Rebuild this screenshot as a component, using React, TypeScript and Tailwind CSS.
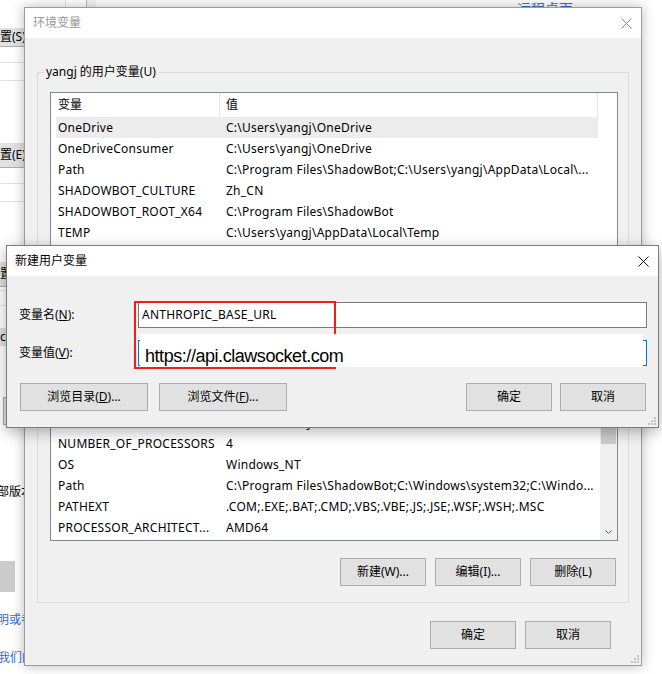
import React from "react";

const ui = "font-['Noto_Sans','Noto_Sans_CJK_SC',sans-serif]";

interface Row {
  name: string;
  value: string;
}

const userVars: Row[] = [
  { name: "OneDrive", value: "C:\\Users\\yangj\\OneDrive" },
  { name: "OneDriveConsumer", value: "C:\\Users\\yangj\\OneDrive" },
  { name: "Path", value: "C:\\Program Files\\ShadowBot;C:\\Users\\yangj\\AppData\\Local\\..." },
  { name: "SHADOWBOT_CULTURE", value: "Zh_CN" },
  { name: "SHADOWBOT_ROOT_X64", value: "C:\\Program Files\\ShadowBot" },
  { name: "TEMP", value: "C:\\Users\\yangj\\AppData\\Local\\Temp" },
  { name: "TMP", value: "C:\\Users\\yangj\\AppData\\Local\\Temp" },
];

const systemVars: Row[] = [
  { name: "ComSpec", value: "C:\\Windows\\system32\\cmd.exe" },
  { name: "DriverData", value: "C:\\Windows\\System32\\Drivers\\DriverData" },
  { name: "NUMBER_OF_PROCESSORS", value: "4" },
  { name: "OS", value: "Windows_NT" },
  { name: "Path", value: "C:\\Program Files\\ShadowBot;C:\\Windows\\system32;C:\\Windo..." },
  { name: "PATHEXT", value: ".COM;.EXE;.BAT;.CMD;.VBS;.VBE;.JS;.JSE;.WSF;.WSH;.MSC" },
  { name: "PROCESSOR_ARCHITECT...", value: "AMD64" },
  { name: "PROCESSOR_IDENTIFIER", value: "Intel64 Family 6 Model 142 Stepping 10, GenuineIntel" },
];

function CloseX({ color }: { color: string }) {
  return (
    <svg width="11" height="11" viewBox="0 0 11 11">
      <path d="M0.5 0.5L10.5 10.5M10.5 0.5L0.5 10.5" stroke={color} strokeWidth="1" fill="none" />
    </svg>
  );
}

function Grip() {
  return (
    <svg width="8" height="8" viewBox="0 0 8 8" fill="#c2c2c2">
      <rect x="6" y="0" width="2" height="2" />
      <rect x="3" y="3" width="2" height="2" />
      <rect x="6" y="3" width="2" height="2" />
      <rect x="0" y="6" width="2" height="2" />
      <rect x="3" y="6" width="2" height="2" />
      <rect x="6" y="6" width="2" height="2" />
    </svg>
  );
}

function Btn({ children, className = "w-[86px]" }: { children: React.ReactNode; className?: string }) {
  return (
    <div
      className={`flex h-[28px] items-center justify-center border border-[#adadad] bg-[#e1e1e1] text-[12px] text-black ${className}`}
    >
      {children}
    </div>
  );
}

function ListHeader() {
  return (
    <div className="flex h-[24px] shrink-0 items-center text-[12px] text-black">
      <div className="flex h-full w-[169px] items-center border-r border-[#e5e5e5] pl-[7px]">变量</div>
      <div className="flex h-full w-[378px] items-center border-r border-[#e5e5e5] pl-[6px]">值</div>
    </div>
  );
}

function ListRow({ row, selected }: { row: Row; selected?: boolean }) {
  return (
    <div
      className={`ml-[5px] flex h-[21px] w-[542px] shrink-0 items-center text-[12px] tracking-[0.25px] text-black ${
        selected ? "bg-[#ececec]" : ""
      }`}
    >
      <div className="w-[164px] overflow-hidden whitespace-nowrap pl-[2px]">{row.name}</div>
      <div className="flex-1 overflow-hidden whitespace-nowrap pl-[6px]">{row.value}</div>
    </div>
  );
}

function GroupBox({ label, children, className = "" }: { label: string; children: React.ReactNode; className?: string }) {
  return (
    <div className={`relative border border-[#dcdcdc] pl-[12px] pr-[10px] pt-[19px] ${className}`}>
      <span className="absolute -top-[9px] left-[6px] bg-[#f0f0f0] px-[2px] text-[12px] leading-[16px] text-black">
        {label}
      </span>
      {children}
    </div>
  );
}

function BackgroundWindow() {
  return (
    <>
      <div className={`absolute left-0 top-0 flex w-[40px] flex-col text-[12px] text-black ${ui}`}>
        <div className="h-[28px]" />
        <div className="h-[19px] border-b border-[#adadad] bg-[#e1e1e1] leading-[18px]">置(S)</div>
        <div className="h-[15px]" />
        <div className="h-[18px] border-t border-[#e3e3e3]" />
        <div className="h-[63px] border-t border-[#e3e3e3]" />
        <div className="h-[25px] border-b border-[#adadad] bg-[#e1e1e1] leading-[24px]">置(E)</div>
        <div className="h-[15px]" />
        <div className="h-[18px] border-t border-[#e3e3e3]" />
        <div className="h-[61px] border-t border-[#e3e3e3]" />
        <div className="h-[25px] border-b border-[#adadad] bg-[#e1e1e1] leading-[24px]">置</div>
        <div className="h-[3px]" />
        <div className="h-[15px] border-t border-[#e3e3e3]" />
        <div className="h-[23px] border-t border-[#e3e3e3]" />
        <div className="h-[18px] bg-[#e1e1e1] leading-[18px]">c(</div>
        <div className="h-[51px]" />
        <div className="ml-[3px] h-[28px] border border-[#adadad] bg-[#e1e1e1]" />
        <div className="h-[59px]" />
        <div className="-ml-[3px] h-[16px] whitespace-nowrap leading-[16px]">部版本</div>
        <div className="h-[61px]" />
        <div className="h-[31px] w-[15px] bg-[#cccccc]" />
        <div className="h-[20px]" />
        <div className="-ml-[3px] h-[16px] whitespace-nowrap leading-[16px] text-[#2e6bd1]">明或者</div>
        <div className="h-[22px]" />
        <div className="-ml-[2px] h-[16px] whitespace-nowrap leading-[16px] text-[#2e6bd1]">我们的</div>
      </div>
      <div className="absolute left-[65px] top-0 h-[7px] w-px bg-[#e3e3e3]" />
      <div className="absolute left-[86px] top-0 h-[7px] w-[10px] border-l border-[#b9b9b9] bg-[#f3f3f3]" />
      <span className={`absolute left-[517px] top-[1px] text-[14px] leading-[16px] text-[#3a6fd0] ${ui}`}>远程桌面</span>
    </>
  );
}

function EnvDialog() {
  return (
    <div
      className={`absolute left-[24px] top-[7px] z-10 flex h-[659px] w-[618px] flex-col border border-[#9c9c9c] bg-[#f0f0f0] shadow-[0_0_12px_rgba(0,0,0,0.28)] ${ui}`}
    >
      <div className="flex h-[30px] shrink-0 items-center justify-between bg-white pl-[8px] pr-[9px]">
        <span className="text-[12px] text-[#999999]">环境变量</span>
        <CloseX color="#8a8a8a" />
      </div>

      <div className="flex flex-1 flex-col px-[12px] pt-[34px]">
        <GroupBox label="yangj 的用户变量(U)" className="pb-[9px]">
          <div className="flex h-[190px] flex-col overflow-hidden border border-[#828790] bg-white">
            <ListHeader />
            {userVars.map((r, i) => (
              <ListRow key={r.name} row={r} selected={i === 0} />
            ))}
          </div>
          <div className="mr-[2px] mt-[10px] flex justify-end gap-[9px]">
            <Btn>新建(N)...</Btn>
            <Btn>编辑(E)...</Btn>
            <Btn>删除(D)</Btn>
          </div>
        </GroupBox>

        <GroupBox label="系统变量(S)" className="mt-[16px] pb-[16px]">
          <div className="flex h-[175px] overflow-hidden border border-[#828790] bg-white">
            <div className="flex flex-1 flex-col overflow-hidden">
              <ListHeader />
              {systemVars.map((r) => (
                <ListRow key={r.name} row={r} />
              ))}
            </div>
            <div className="flex w-[17px] shrink-0 flex-col bg-[#f0f0f0]">
              <div className="flex h-[17px] items-center justify-center">
                <svg width="7" height="4" viewBox="0 0 7 4">
                  <path d="M0.5 3.5L3.5 0.5L6.5 3.5" stroke="#606060" fill="none" />
                </svg>
              </div>
              <div className="mx-[1px] h-[60px] bg-[#cdcdcd]" />
              <div className="flex-1" />
              <div className="flex h-[17px] items-center justify-center">
                <svg width="7" height="4" viewBox="0 0 7 4">
                  <path d="M0.5 0.5L3.5 3.5L6.5 0.5" stroke="#606060" fill="none" />
                </svg>
              </div>
            </div>
          </div>
          <div className="mr-[2px] mt-[17px] flex justify-end gap-[9px]">
            <Btn>新建(W)...</Btn>
            <Btn>编辑(I)...</Btn>
            <Btn>删除(L)</Btn>
          </div>
        </GroupBox>

        <div className="mr-[18px] mt-[18px] flex justify-end gap-[9px]">
          <Btn>确定</Btn>
          <Btn>取消</Btn>
        </div>
      </div>

      <div className="absolute bottom-[2px] right-[2px]">
        <Grip />
      </div>
    </div>
  );
}

function NewVarDialog() {
  return (
    <div
      className={`absolute left-[6px] top-[245px] z-20 flex h-[183px] w-[653px] flex-col border border-[#7a7a7a] bg-[#f0f0f0] shadow-[0_4px_14px_rgba(0,0,0,0.3)] ${ui}`}
    >
      <div className="flex h-[30px] shrink-0 items-center justify-between bg-white pl-[8px] pr-[9px]">
        <span className="text-[12px] text-black">新建用户变量</span>
        <CloseX color="#111111" />
      </div>

      <div className="flex flex-1 flex-col pl-[12px] pr-[11px] pt-[26px] text-[12px] text-black">
        <div className="flex h-[26px] items-center">
          <div className="w-[119px]">
            变量名(<span className="underline">N</span>):
          </div>
          <div className="flex h-full flex-1 items-center border border-[#7a7a7a] bg-white pl-[3px] tracking-[0.25px]">
            ANTHROPIC_BASE_URL
          </div>
        </div>
        <div className="mt-[12px] flex h-[26px] items-center">
          <div className="w-[119px]">
            变量值(<span className="underline">V</span>):
          </div>
          <div className="h-full flex-1 border border-[#0078d7] bg-white" />
        </div>
        <div className="mt-[17px] flex items-center justify-between">
          <div className="ml-[1px] flex gap-[11px]">
            <Btn className="w-[128px]">
              浏览目录(<span className="underline">D</span>)...
            </Btn>
            <Btn className="w-[128px]">
              浏览文件(<span className="underline">F</span>)...
            </Btn>
          </div>
          <div className="mr-[1px] flex gap-[8px]">
            <Btn>确定</Btn>
            <Btn>取消</Btn>
          </div>
        </div>
      </div>

      {/* annotation: red frame and pasted value field */}
      <div className="absolute left-[127px] top-[55px] h-[68px] w-[202px] border-2 border-[#f51c1c]" />
      <div className="absolute left-[133px] top-[88px] h-[33px] w-[503px] bg-white pl-[5px] pt-[10px]">
        <span className="whitespace-nowrap font-['Liberation_Sans',Arial,sans-serif] text-[18px] leading-[20px] tracking-[-0.45px] text-black">
          https://api.clawsocket.com
        </span>
      </div>

      <div className="absolute bottom-[2px] right-[2px]">
        <Grip />
      </div>
    </div>
  );
}

export default function App() {
  return (
    <div className="relative h-[674px] w-[662px] overflow-hidden bg-white">
      <BackgroundWindow />
      <EnvDialog />
      <NewVarDialog />
    </div>
  );
}
